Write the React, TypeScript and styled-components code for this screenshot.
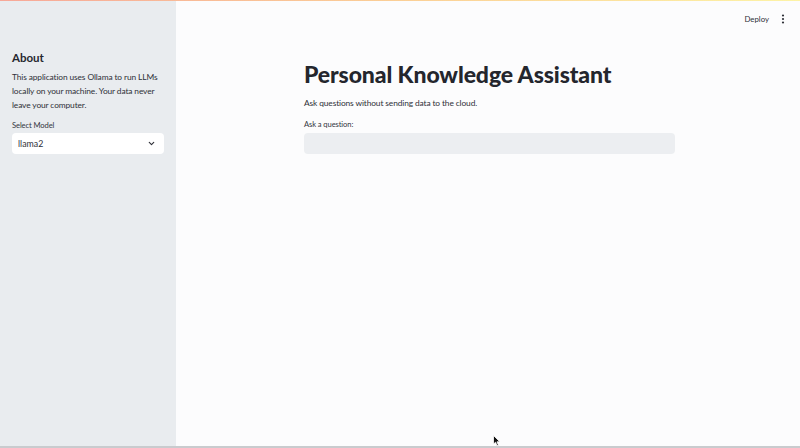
import React from 'react';
import styled, { createGlobalStyle } from 'styled-components';

const GlobalStyle = createGlobalStyle`
  html, body {
    margin: 0;
    padding: 0;
    height: 100%;
  }
  body {
    font-family: Lato, "Noto Sans", sans-serif;
    color: #31333f;
    background: #fbfbfc;
  }
  #root {
    height: 100%;
  }
`;

const Page = styled.div`
  position: relative;
  width: 800px;
  height: 448px;
  display: flex;
  flex-direction: column;
  overflow: hidden;
`;

const Decoration = styled.div`
  height: 1px;
  background: linear-gradient(90deg, #f7a898, #fbcf96 50%, #fdf3a6);
`;

const Body = styled.div`
  flex: 1;
  display: flex;
  min-height: 0;
`;

const Sidebar = styled.aside`
  width: 176px;
  flex-shrink: 0;
  background: #e9ecef;
  padding: 50px 12px 0;
  box-sizing: border-box;
`;

const SideTitle = styled.h3`
  margin: 0 0 6px;
  font-size: 11.5px;
  font-weight: 700;
  color: #26272e;
`;

const SideText = styled.p`
  margin: 0 0 8px;
  font-size: 8.4px;
  letter-spacing: -0.12px;
  line-height: 14px;
  color: #2e3038;
`;

const Label = styled.div<{ $gap?: number }>`
  font-size: 7.6px;
  letter-spacing: -0.1px;
  color: #33353d;
  margin-bottom: ${(p) => p.$gap ?? 3}px;
`;

const SelectBox = styled.div`
  height: 21px;
  background: #fff;
  border-radius: 4px;
  display: flex;
  align-items: center;
  justify-content: space-between;
  padding: 0 8px 0 6px;
  font-size: 8.8px;
  color: #2e3038;
`;

const Main = styled.main`
  flex: 1;
  display: flex;
  flex-direction: column;
  background: #fcfcfd;
`;

const Header = styled.header`
  height: 36px;
  display: flex;
  align-items: center;
  justify-content: flex-end;
  gap: 12px;
  padding-right: 15px;
`;

const DeployButton = styled.span`
  font-size: 7.8px;
  color: #2e3038;
`;

const Content = styled.section`
  width: 371px;
  margin-left: 128px;
  padding-top: 22px;
`;

const Title = styled.h1`
  margin: 0 0 9px;
  font-size: 23px;
  font-weight: 900;
  line-height: 30px;
  color: #24262d;
  letter-spacing: -0.1px;
`;

const Subtitle = styled.p`
  margin: 0 0 11px;
  font-size: 8.4px;
  letter-spacing: -0.12px;
  color: #2e3038;
`;

const TextInput = styled.div`
  height: 21px;
  background: #eceef1;
  border-radius: 4px;
`;

const BottomBar = styled.div`
  height: 2px;
  background: #c9cbce;
`;

const Cursor = styled.svg`
  position: absolute;
  left: 493px;
  top: 435px;
`;

const Chevron = () => (
  <svg width="9" height="9" viewBox="0 0 24 24" fill="none" stroke="#2e3038" strokeWidth="3" strokeLinecap="round" strokeLinejoin="round">
    <polyline points="6 9 12 15 18 9" />
  </svg>
);

const Kebab = () => (
  <svg width="4" height="10" viewBox="0 0 4 10" fill="#2e3038">
    <circle cx="2" cy="1.5" r="1.1" />
    <circle cx="2" cy="5" r="1.1" />
    <circle cx="2" cy="8.5" r="1.1" />
  </svg>
);

export default function App() {
  return (
    <>
      <GlobalStyle />
      <Page>
        <Decoration />
        <Body>
          <Sidebar>
            <SideTitle>About</SideTitle>
            <SideText>
              This application uses Ollama to run LLMs locally on your machine. Your data never
              leave your computer.
            </SideText>
            <Label $gap={3}>Select Model</Label>
            <SelectBox>
              <span>llama2</span>
              <Chevron />
            </SelectBox>
          </Sidebar>
          <Main>
            <Header>
              <DeployButton>Deploy</DeployButton>
              <Kebab />
            </Header>
            <Content>
              <Title>Personal Knowledge Assistant</Title>
              <Subtitle>Ask questions without sending data to the cloud.</Subtitle>
              <Label $gap={4}>Ask a question:</Label>
              <TextInput />
            </Content>
          </Main>
        </Body>
        <BottomBar />
        <Cursor width="8" height="12" viewBox="0 0 8 12">
          <path d="M0.5 0.5 L0.5 9 L2.6 7.2 L4 10.8 L5.4 10.2 L4 6.8 L6.8 6.8 Z" fill="#111" stroke="#fff" strokeWidth="0.8" />
        </Cursor>
      </Page>
    </>
  );
}
